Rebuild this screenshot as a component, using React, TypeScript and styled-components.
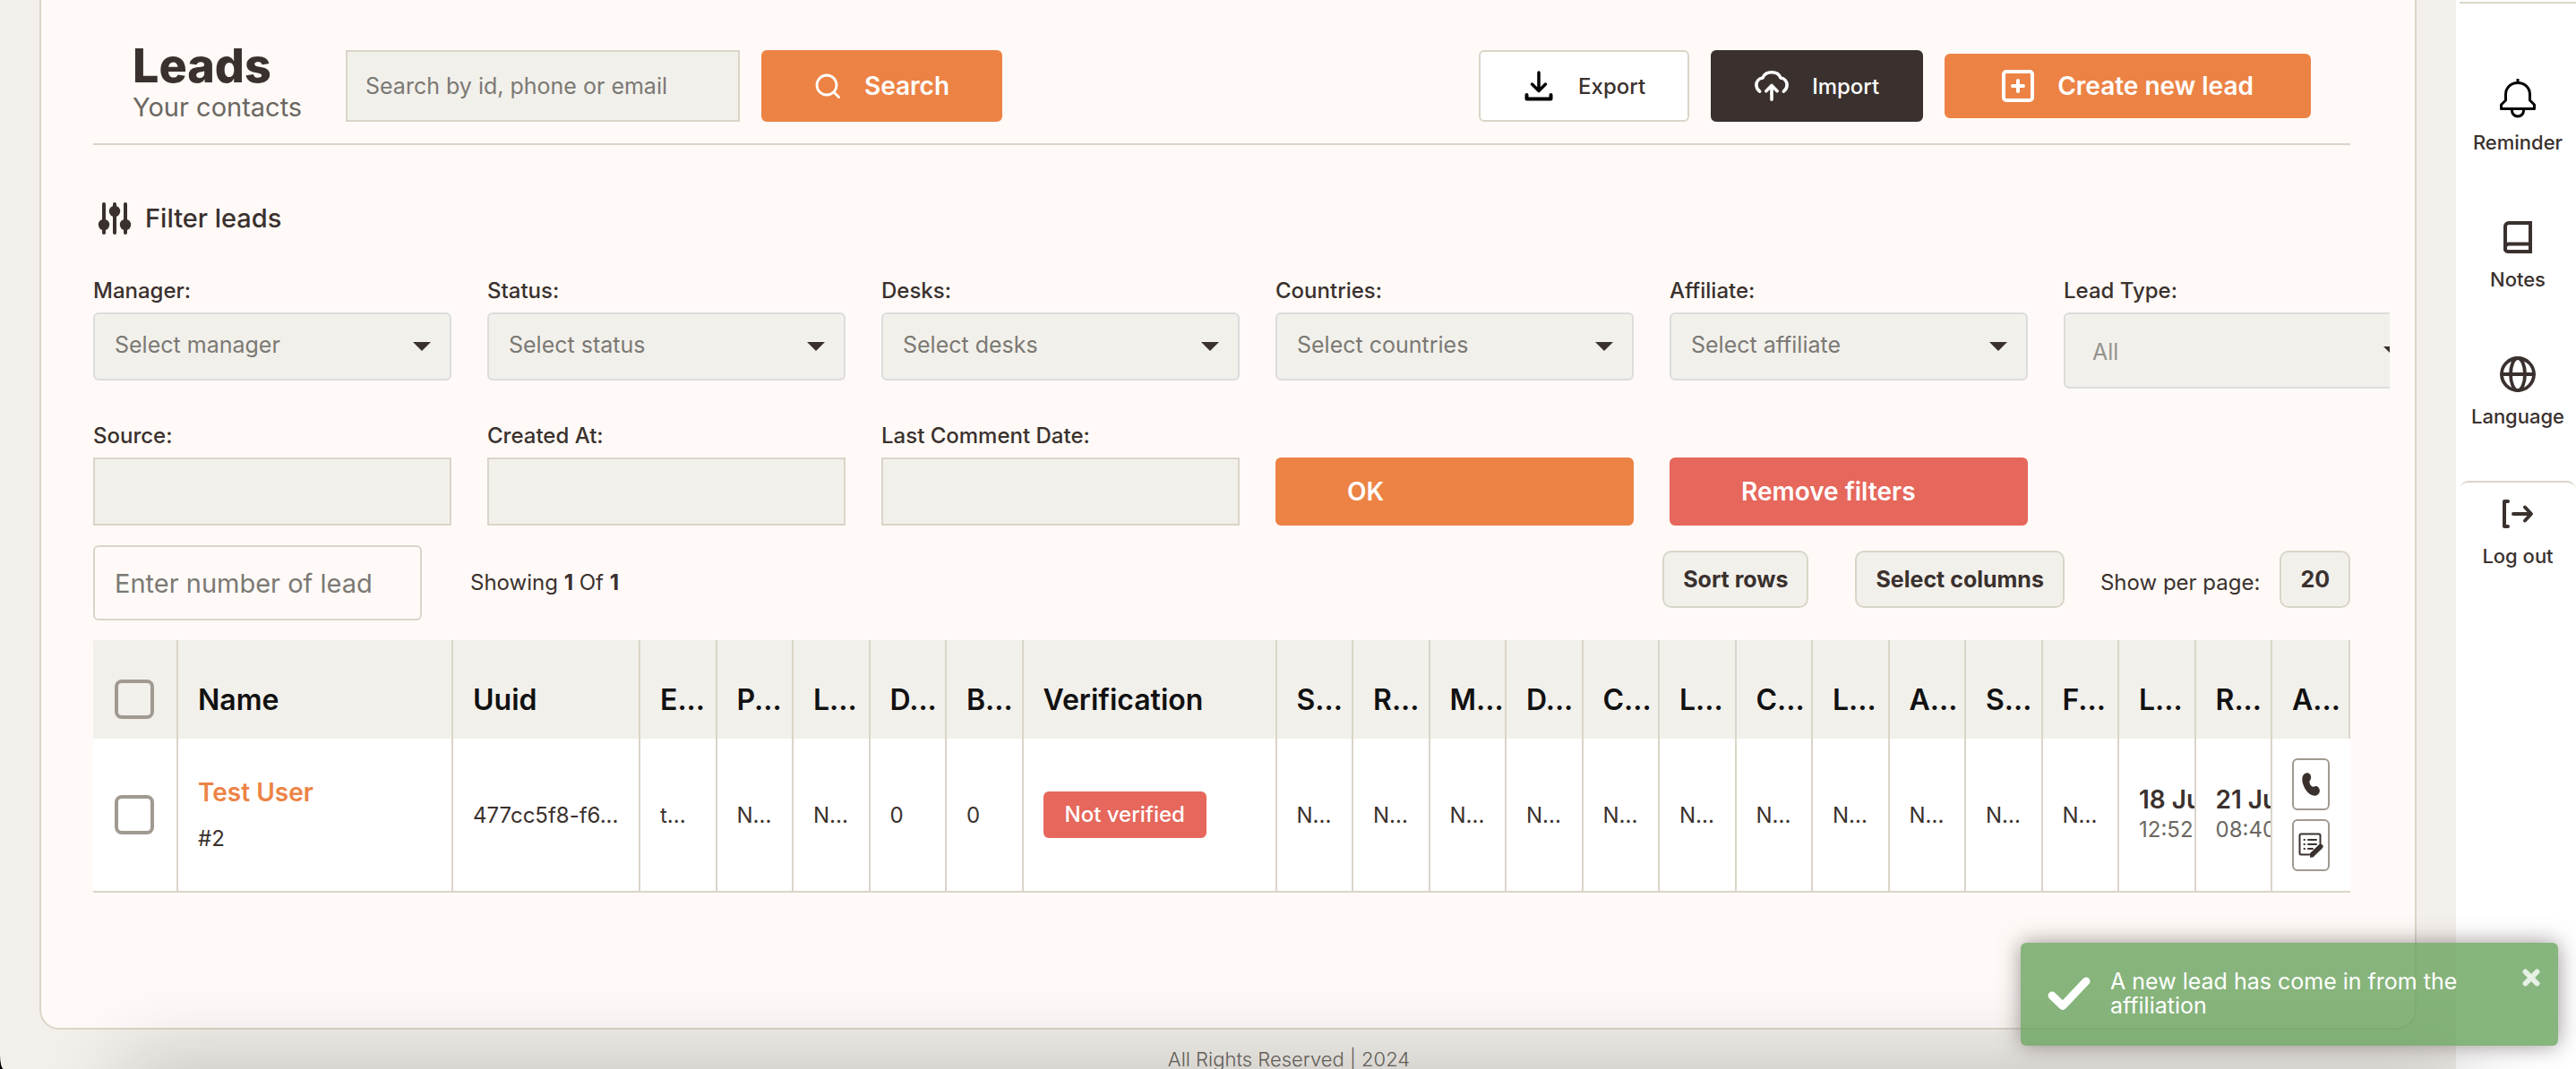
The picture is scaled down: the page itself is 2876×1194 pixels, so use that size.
import React from "react";
import styled, { createGlobalStyle, css } from "styled-components";

const color = {
  ink: "#3a312e",
  soft: "#6b6761",
  hint: "#7b7974",
  line: "#dad5c8",
  cool: "#dcdcdc",
  page: "#f3f0eb",
  card: "#fffaf7",
  field: "#f2f0eb",
  orange: "#ec8345",
  red: "#e6675c",
};

const GlobalStyle = createGlobalStyle`
  *, *::before, *::after { box-sizing: border-box; }
  html, body { margin: 0; background: #000; }
  body, button, input, select {
    font-family: Inter, "Liberation Sans", sans-serif;
    color: ${color.ink};
  }
  button { cursor: pointer; }
`;

const Shell = styled.div`
  position: relative;
  display: flex;
  min-height: 100vh;
  overflow: hidden;
  background: ${color.page};
  border-bottom-left-radius: 4px 16px;
`;

const Main = styled.main`
  flex: 1;
  min-width: 0;
  display: flex;
  flex-direction: column;
  padding: 0 44px;
`;

const Card = styled.section`
  flex: 1;
  padding: 0 72px 0 58px;
  background: ${color.card};
  border: 2px solid ${color.line};
  border-top: 0;
  border-radius: 0 0 22px 22px;
`;

const Header = styled.header`
  display: flex;
  align-items: center;
  gap: 24px;
  padding: 50px 44px 18px;
  border-bottom: 2px solid ${color.line};
`;

const TitleBlock = styled.div`
  width: 214px;
  padding-bottom: 4px;
`;

const Title = styled.h1`
  margin: 0 0 4px;
  font-size: 52px;
  font-weight: 800;
  line-height: 48px;
`;

const Subtitle = styled.p`
  margin: 0;
  color: ${color.soft};
  font-size: 29px;
  line-height: 36px;
`;

const SearchInput = styled.input`
  width: 440px;
  height: 80px;
  padding: 0 20px;
  font-size: 25px;
  background: ${color.field};
  border: 2px solid ${color.line};
  border-radius: 0;
  &::placeholder { color: ${color.hint}; opacity: 1; }
`;

const Spacer = styled.div`
  flex: 1;
`;

type Tone = "orange" | "white" | "dark" | "red";

const tones = {
  orange: css`background: ${color.orange}; color: #fff; border-color: ${color.orange};`,
  red: css`background: ${color.red}; color: #fff; border-color: ${color.red};`,
  white: css`background: #fff; border-color: ${color.line};`,
  dark: css`background: ${color.ink}; color: #fff; border-color: ${color.ink};`,
};

const Button = styled.button<{ $tone: Tone; $strong?: boolean; $height?: number; $pad?: number }>`
  display: flex;
  align-items: center;
  gap: 26px;
  height: ${(p) => p.$height ?? 80}px;
  padding: 0 ${(p) => p.$pad ?? 47}px;
  border: 2px solid;
  border-radius: 6px;
  font-size: ${(p) => (p.$strong ? 28 : 24)}px;
  font-weight: ${(p) => (p.$strong ? 600 : 500)};
  white-space: nowrap;
  ${(p) => tones[p.$tone]}
`;

const FilterHeading = styled.h2`
  display: flex;
  align-items: center;
  gap: 12px;
  margin: 63px 0 48px;
  padding-left: 4px;
  font-size: 29px;
  font-weight: 500;
  line-height: 36px;
`;

const Filters = styled.form`
  display: grid;
  grid-template-columns: repeat(6, 400px);
  gap: 39px 40px;
  align-items: start;
  margin-right: -44px;
  overflow: hidden;
`;

const Field = styled.div`
  display: flex;
  flex-direction: column;
  gap: 10px;
`;

const Label = styled.label`
  font-size: 24px;
  font-weight: 500;
  line-height: 28px;
`;

const SelectBox = styled.div`
  display: grid;
  align-items: center;
  &::after {
    content: "";
    grid-area: 1 / 1;
    justify-self: end;
    margin-right: 23px;
    border: 10px solid transparent;
    border-top-color: ${color.ink};
    border-bottom: 0;
    pointer-events: none;
  }
`;

const Select = styled.select<{ $tall?: boolean }>`
  grid-area: 1 / 1;
  appearance: none;
  width: 100%;
  height: ${(p) => (p.$tall ? 85 : 76)}px;
  padding: ${(p) => (p.$tall ? "2px 30px 0" : "0 22px 4px")};
  color: ${(p) => (p.$tall ? "#96938e" : color.hint)};
  font-size: 25px;
  background: ${color.field};
  border: 2px solid ${color.cool};
  border-radius: 6px;
`;

const TextInput = styled.input`
  width: 100%;
  height: 76px;
  padding: 0 20px;
  font-size: 25px;
  background: ${color.field};
  border: 2px solid ${color.line};
  border-radius: 0;
`;

const FilterAction = styled(Button)`
  align-self: end;
  width: 100%;
`;

const Toolbar = styled.div`
  display: flex;
  align-items: center;
  margin: 22px 0;
`;

const CountInput = styled.input`
  width: 367px;
  height: 84px;
  margin-right: 54px;
  padding: 0 52px 0 22px;
  font-size: 29px;
  background: transparent;
  border: 2px solid ${color.line};
  border-radius: 6px;
  &::placeholder { color: ${color.hint}; opacity: 1; }
`;

const Note = styled.span`
  font-size: 24px;
  line-height: 28px;
`;

const ToolGroup = styled.div`
  display: flex;
  align-items: center;
  gap: 22px;
  padding-bottom: 8px;
`;

const PerPage = styled(Note)`
  padding: 8px 0 0 18px;
`;

const Chip = styled.button`
  height: 64px;
  padding: 0 21px;
  font-size: 25px;
  font-weight: 700;
  background: ${color.field};
  border: 2px solid ${color.line};
  border-radius: 10px;
  & + & { margin-left: 30px; }
`;

const Table = styled.table`
  width: 100%;
  table-layout: fixed;
  border-collapse: separate;
  border-spacing: 0;
`;

const Col = styled.col<{ $w?: number }>`
  width: ${(p) => (p.$w ? `${p.$w}px` : "auto")};
`;

const HeadCell = styled.th`
  height: 110px;
  padding: 22px 0 0 22px;
  color: #111;
  font-size: 32px;
  font-weight: 600;
  text-align: left;
  white-space: nowrap;
  overflow: hidden;
  background: ${color.field};
  border-right: 2px solid ${color.line};
`;

const Cell = styled.td`
  height: 172px;
  padding: 0 0 0 22px;
  font-size: 24px;
  white-space: nowrap;
  overflow: hidden;
  background: #fff;
  border-right: 2px solid ${color.line};
  border-bottom: 2px solid ${color.line};
  &:last-child { border-right: 0; }
`;

const Check = styled.input`
  appearance: none;
  display: block;
  width: 44px;
  height: 44px;
  margin: 0 0 0 2px;
  border: 4px solid #a09a91;
  border-radius: 8px;
`;

const UserLink = styled.a`
  display: block;
  margin-bottom: 22px;
  color: ${color.orange};
  font-size: 28px;
  font-weight: 600;
  line-height: 32px;
  text-decoration: none;
`;

const UserNo = styled.span`
  display: block;
  line-height: 28px;
`;

const Badge = styled.span`
  display: inline-block;
  padding: 0 24px;
  color: #fff;
  font-weight: 500;
  line-height: 52px;
  background: ${color.red};
  border-radius: 6px;
`;

const Day = styled.strong`
  display: block;
  font-size: 28px;
  font-weight: 600;
  line-height: 34px;
`;

const Time = styled.span`
  display: block;
  color: ${color.soft};
  line-height: 34px;
`;

const RowActions = styled.div`
  display: flex;
  flex-direction: column;
  gap: 10px;
`;

const IconButton = styled.button`
  display: grid;
  place-items: center;
  width: 42px;
  height: 58px;
  padding: 0;
  background: #fff;
  border: 2px solid #a09a91;
  border-radius: 6px;
`;

const Footer = styled.footer`
  padding: 22px 0 0 136px;
  color: ${color.soft};
  font-size: 22px;
  font-weight: 300;
  line-height: 22px;
  text-align: center;
`;

const Aside = styled.aside`
  width: 134px;
  padding: 2px 0 0 4px;
  background: #fff;
`;

const Nav = styled.nav`
  display: flex;
  flex-direction: column;
  gap: 72px;
  padding: 84px 0 58px;
  border-top: 2px solid ${color.line};
`;

const Exit = styled.div`
  padding-top: 15px;
  border-top: 2px solid ${color.line};
  border-radius: 10px 10px 0 0;
`;

const NavButton = styled.button`
  display: flex;
  flex-direction: column;
  align-items: center;
  gap: 13px;
  width: 100%;
  padding: 0;
  background: none;
  border: 0;
  font-size: 22px;
  font-weight: 500;
  line-height: 28px;
  white-space: nowrap;
`;

const BottomShade = styled.div`
  position: absolute;
  left: 150px;
  right: 134px;
  top: 100%;
  height: 100px;
  box-shadow: 0 0 90px 12px rgba(0, 0, 0, 0.18);
  pointer-events: none;
`;

const Toast = styled.div`
  position: absolute;
  right: 20px;
  bottom: 26px;
  display: flex;
  align-items: center;
  width: 600px;
  height: 115px;
  padding: 0 20px 2px 30px;
  color: #fff;
  font-size: 25px;
  line-height: 27px;
  background: rgba(104, 163, 92, 0.8);
  border-radius: 6px;
  box-shadow: 0 0 24px rgba(110, 100, 100, 0.7);
`;

const ToastText = styled.p`
  flex: 1;
  margin: 0 20px 0 22px;
`;

const Close = styled.button`
  align-self: flex-start;
  display: grid;
  margin-top: 28px;
  padding: 0;
  background: none;
  border: 0;
`;

const stroke = (w: number, c = "currentColor") => ({
  fill: "none",
  stroke: c,
  strokeWidth: w,
  strokeLinecap: "round" as const,
  strokeLinejoin: "round" as const,
});

const SearchIcon = () => (
  <svg width="30" height="30" viewBox="0 0 30 30" {...stroke(2.8)}>
    <circle cx="14" cy="14" r="11" />
    <path d="M22 22l5.500 5.500" />
  </svg>
);

const ExportIcon = () => (
  <svg width="36" height="36" viewBox="0 0 36 36" {...stroke(3.5, "#000")}>
    <path d="M18 3v20M10.500 16l7.500 7.500 7.500-7.500" />
    <path d="M4.500 28v4.500h27V28" strokeWidth="4" />
  </svg>
);

const ImportIcon = () => (
  <svg width="38" height="36" viewBox="0 0 40 36" {...stroke(3.8)}>
    <path d="M6 24.500C3.500 22.500 2 20 2 17c0-4.500 3-8 7.500-8.500C11 4.500 15 2 20 2s9 2.500 10.500 6.500C35 9 38 12.500 38 17c0 3-1.500 5.500-4 7.500" />
    <path d="M20 34V18.500M13.500 24l6.500-6.500 6.500 6.500" />
  </svg>
);

const PlusBox = () => (
  <svg width="36" height="36" viewBox="0 0 36 36" {...stroke(4)}>
    <rect x="2" y="2" width="32" height="32" rx="3" />
    <path d="M18 12v12M12 18h12" />
  </svg>
);

const SlidersIcon = () => (
  <svg width="42" height="38" viewBox="0 0 42 38" {...stroke(4)}>
    <path d="M8 3v32M20 3v32M32 3v32" />
    <g fill="currentColor" stroke="none">
      <circle cx="8" cy="26" r="6.200" />
      <circle cx="20" cy="11" r="6.200" />
      <circle cx="32" cy="26" r="6.200" />
    </g>
  </svg>
);

const BellIcon = () => (
  <svg width="40" height="44" viewBox="0 0 40 44" {...stroke(3, "#000")} strokeLinecap="butt">
    <path d="M20 0v5" />
    <path d="M20 4.500c-7.500 0-13.500 5.500-13.500 13v6.500L1.500 29v4.500h37V29l-5-5v-6.500c0-7.500-6-13-13.500-13z" />
    <path d="M13.500 33.500v2a6.500 6.500 0 0013 0v-2" />
  </svg>
);

const NotesIcon = () => (
  <svg width="32" height="40" viewBox="0 0 32 40" {...stroke(4)}>
    <path d="M30 4H6a4 4 0 00-4 4v26a4 4 0 004 2h24z" strokeLinejoin="miter" />
    <path d="M2 31a4 4 0 014-3.500h24" />
  </svg>
);

const GlobeIcon = () => (
  <svg width="40" height="40" viewBox="0 0 40 40" {...stroke(3.8)}>
    <circle cx="20" cy="20" r="18" />
    <ellipse cx="20" cy="20" rx="8" ry="18" />
    <path d="M2 20h36" />
  </svg>
);

const LogoutIcon = () => (
  <svg width="36" height="40" viewBox="0 0 36 40" {...stroke(4)}>
    <path d="M7 6H3v28h4" />
    <path d="M13 20h19M26 12.500l7 7.500-7 7.500" />
  </svg>
);

const PhoneIcon = () => (
  <svg width="20" height="26" viewBox="0 0 20 26" fill="currentColor">
    <path d="M4.500.5C7.500-.3 10 1.800 10.200 5c.1 2.800-2.200 4-1.700 6 .6 2.800 2 4.600 3.700 4.800 1.300.1 2.300-1.300 4-.8 2.500.8 4 3.500 3.600 6-.5 3-3.300 5.200-6.300 4.800C6.500 25 .5 15 .3 8 .2 4 1.500 1.300 4.500.5z" />
  </svg>
);

const FormIcon = () => (
  <svg width="28" height="28" viewBox="0 0 28 28" {...stroke(2)}>
    <path d="M24.500 12V3a1.500 1.500 0 00-1.500-1.500H3A1.500 1.500 0 001.500 3v20A1.500 1.500 0 003 24.500h9" />
    <path d="M11 8h9M11 13h9M11 18h5M6.500 8h.5M6.500 13h.5M6.500 18h.5" />
    <path d="M24.800 15.500L15.500 24.500" strokeWidth="5.500" />
    <path d="M13.500 27l1-3.500 2.500 2.500z" fill="currentColor" strokeWidth="1" />
  </svg>
);

const TickIcon = () => (
  <svg width="48" height="40" viewBox="0 0 48 40" {...stroke(9)}>
    <path d="M5 22L17 33.500 43 6" />
  </svg>
);

const CrossIcon = () => (
  <svg width="20" height="22" viewBox="0 0 20 22" {...stroke(6, "#e6f0e4")}>
    <path d="M3.500 4.500l13 13M16.500 4.500l-13 13" />
  </svg>
);

const selects = [
  ["Manager", "Select manager"],
  ["Status", "Select status"],
  ["Desks", "Select desks"],
  ["Countries", "Select countries"],
  ["Affiliate", "Select affiliate"],
  ["Lead Type", "All"],
];

const inputs = ["Source", "Created At", "Last Comment Date"];

const columns: { head: string; width?: number; cell: React.ReactNode }[] = [
  {
    head: "Name",
    width: 307,
    cell: (
      <>
        <UserLink href="#lead">Test User</UserLink>
        <UserNo>#2</UserNo>
      </>
    ),
  },
  { head: "Uuid", width: 209, cell: "477cc5f8-f6..." },
  { head: "E...", cell: "t..." },
  { head: "P...", cell: "N..." },
  { head: "L...", cell: "N..." },
  { head: "D...", cell: "0" },
  { head: "B...", cell: "0" },
  { head: "Verification", width: 283, cell: <Badge>Not verified</Badge> },
  ...["S", "R", "M", "D", "C", "L", "C", "L", "A", "S", "F"].map((l) => ({ head: `${l}...`, cell: "N..." })),
  { head: "L...", cell: <><Day>18 Ju</Day><Time>12:52</Time></> },
  { head: "R...", cell: <><Day>21 Ju</Day><Time>08:40</Time></> },
  {
    head: "A...",
    width: 87,
    cell: (
      <RowActions>
        <IconButton aria-label="Call"><PhoneIcon /></IconButton>
        <IconButton aria-label="Edit"><FormIcon /></IconButton>
      </RowActions>
    ),
  },
];

export default function App() {
  return (
    <>
      <GlobalStyle />
      <Shell>
        <Main>
          <Card>
            <Header>
              <TitleBlock>
                <Title>Leads</Title>
                <Subtitle>Your contacts</Subtitle>
              </TitleBlock>
              <SearchInput aria-label="Search" placeholder="Search by id, phone or email" />
              <Button $tone="orange" $strong $pad={57}><SearchIcon />Search</Button>
              <Spacer />
              <Button $tone="white"><ExportIcon />Export</Button>
              <Button $tone="dark"><ImportIcon />Import</Button>
              <Button $tone="orange" $strong $height={72} $pad={62}><PlusBox />Create new lead</Button>
            </Header>

            <FilterHeading><SlidersIcon />Filter leads</FilterHeading>

            <Filters onSubmit={(e) => e.preventDefault()}>
              {selects.map(([name, value]) => (
                <Field key={name}>
                  <Label htmlFor={name}>{name}:</Label>
                  <SelectBox>
                    <Select id={name} $tall={name === "Lead Type"}>
                      <option>{value}</option>
                    </Select>
                  </SelectBox>
                </Field>
              ))}
              {inputs.map((name) => (
                <Field key={name}>
                  <Label htmlFor={name}>{name}:</Label>
                  <TextInput id={name} />
                </Field>
              ))}
              <FilterAction $tone="orange" $strong $height={76} $pad={78}>OK</FilterAction>
              <FilterAction $tone="red" $strong $height={76} $pad={78} type="button">Remove filters</FilterAction>
            </Filters>

            <Toolbar>
              <CountInput aria-label="Number of leads" placeholder="Enter number of leads" />
              <Note>Showing <b>1</b> Of <b>1</b></Note>
              <Spacer />
              <ToolGroup>
                <Chip>Sort rows</Chip>
                <Chip>Select columns</Chip>
                <PerPage>Show per page:</PerPage>
                <Chip>20</Chip>
              </ToolGroup>
            </Toolbar>

            <Table>
              <colgroup>
                <Col $w={95} />
                {columns.map((c, i) => <Col key={i} $w={c.width} />)}
              </colgroup>
              <thead>
                <tr>
                  <HeadCell><Check type="checkbox" aria-label="Select all" /></HeadCell>
                  {columns.map((c, i) => <HeadCell key={i}>{c.head}</HeadCell>)}
                </tr>
              </thead>
              <tbody>
                <tr>
                  <Cell><Check type="checkbox" aria-label="Select Test User" /></Cell>
                  {columns.map((c, i) => <Cell key={i}>{c.cell}</Cell>)}
                </tr>
              </tbody>
            </Table>
          </Card>
          <Footer>All Rights Reserved | 2024</Footer>
        </Main>

        <Aside>
          <Nav>
            <NavButton><BellIcon />Reminder</NavButton>
            <NavButton><NotesIcon />Notes</NavButton>
            <NavButton><GlobeIcon />Language</NavButton>
          </Nav>
          <Exit>
            <NavButton><LogoutIcon />Log out</NavButton>
          </Exit>
        </Aside>

        <BottomShade />
        <Toast role="status">
          <TickIcon />
          <ToastText>A new lead has come in from the affiliation</ToastText>
          <Close aria-label="Close"><CrossIcon /></Close>
        </Toast>
      </Shell>
    </>
  );
}
